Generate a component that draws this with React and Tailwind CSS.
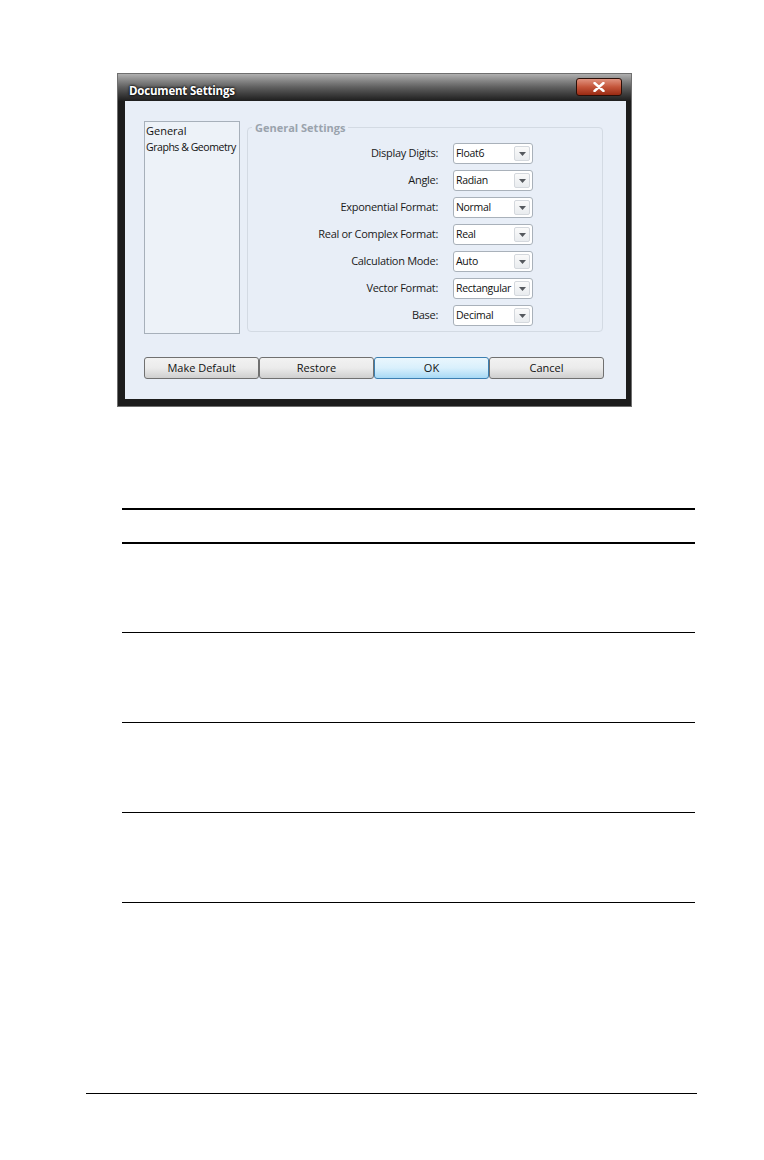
import React from "react";

const rows = [
  ["Display Digits:", "Float6"],
  ["Angle:", "Radian"],
  ["Exponential Format:", "Normal"],
  ["Real or Complex Format:", "Real"],
  ["Calculation Mode:", "Auto"],
  ["Vector Format:", "Rectangular"],
  ["Base:", "Decimal"],
];

const Select = ({ value }) => (
  <div className="w-[80px] h-[21px] flex items-center justify-between bg-white border border-[#a9b1ba] rounded-[3px] pl-[2px] pr-[2px]">
    <span className="text-[10.5px] text-[#111] leading-none tracking-[-0.3px] whitespace-nowrap">{value}</span>
    <div className="w-[16px] h-[15px] shrink-0 flex items-center justify-center border border-[#d4d8dd] rounded-[2px] bg-gradient-to-b from-[#fafafa] to-[#e9ecef]">
      <svg width="7" height="4" viewBox="0 0 7 4">
        <path d="M0 0 L7 0 L3.5 4 Z" fill="#55595e" />
      </svg>
    </div>
  </div>
);

const Button = ({ children, primary }) => (
  <div
    className={`w-[115px] h-[22px] flex items-center justify-center rounded-[3px] border text-[11px] text-[#111] ${
      primary
        ? "border-[#3c7fb1] bg-gradient-to-b from-[#eaf6fd] via-[#d9f0fc] to-[#a7d9f5]"
        : "border-[#707070] bg-gradient-to-b from-[#f2f2f2] via-[#ebebeb] to-[#cfcfcf]"
    }`}
  >
    {children}
  </div>
);

export default function App() {
  return (
    <div
      className="w-[764px] h-[1160px] bg-white overflow-hidden"
      style={{ fontFamily: '"Open Sans", "Noto Sans", sans-serif' }}
    >
      {/* dialog window */}
      <div className="pt-[73px] pl-[117px]">
        <div className="w-[515px] h-[334px] border border-[#6f6f6f] bg-[#1c1c1c] flex flex-col">
          <div className="h-[27px] flex items-center justify-between pl-[11px] pr-[9px] bg-gradient-to-b from-[#b0b0b0] via-[#5e5e5e] to-[#1e1e1e]">
            <span
              className="text-[11.5px] font-bold text-white leading-none mt-[6px] tracking-[-0.2px]"
              style={{ textShadow: "0 0 3px #000, 0 0 2px #000" }}
            >
              Document Settings
            </span>
            <div className="w-[46px] h-[18px] mt-[-1px] rounded-[3px] border border-[#2b0f08] bg-gradient-to-b from-[#e0937f] via-[#c4553a] to-[#9a2a12] flex items-center justify-center">
              <svg width="12" height="10" viewBox="0 0 12 10">
                <path d="M1.5 1 L10.5 9 M10.5 1 L1.5 9" stroke="#fff" strokeWidth="2.4" strokeLinecap="round" />
              </svg>
            </div>
          </div>
          <div className="flex-1 ml-[7px] mr-[5px] mb-[7px] bg-[#e8eef7] pl-[19px] pt-[20px]">
            <div className="flex items-start">
              <div className="w-[96px] h-[213px] overflow-hidden border border-[#a7b0ba] bg-[#edf2f8] pl-[1px] pt-[1px] text-[11px] text-[#111] leading-[16px] whitespace-nowrap">
                <div>General</div>
                <div className="text-[10.5px] tracking-[-0.45px]">Graphs &amp; Geometry</div>
              </div>
              <fieldset className="ml-[7px] mt-[1px] w-[356px] h-[210px] border border-[#d3dae3] rounded-[4px] pt-[4px] m-0">
                <legend className="ml-[4px] px-[3px] text-[11px] font-bold text-[#9aa3ad] leading-none">
                  General Settings
                </legend>
                <div className="flex flex-col gap-[6px] mt-[6px]">
                  {rows.map(([label, value]) => (
                    <div key={label} className="flex items-center">
                      <div className="w-[190px] text-right text-[11px] text-[#1a1a1a] tracking-[-0.3px]">{label}</div>
                      <div className="ml-[15px]">
                        <Select value={value} />
                      </div>
                    </div>
                  ))}
                </div>
              </fieldset>
            </div>
            <div className="flex mt-[23px]">
              <Button>Make Default</Button>
              <Button>Restore</Button>
              <Button primary>OK</Button>
              <Button>Cancel</Button>
            </div>
          </div>
        </div>
      </div>

      {/* table */}
      <div className="mt-[101px] ml-[122px] w-[573px]">
        <div className="h-[36px] border-t-[2px] border-b-[2px] border-black" />
        <div className="h-[89px] border-b border-black" />
        <div className="h-[90px] border-b border-black" />
        <div className="h-[90px] border-b border-black" />
        <div className="h-[90px] border-b border-black" />
      </div>

      {/* footer rule */}
      <div className="mt-[190px] ml-[86px] w-[611px] border-t border-black" />
    </div>
  );
}
